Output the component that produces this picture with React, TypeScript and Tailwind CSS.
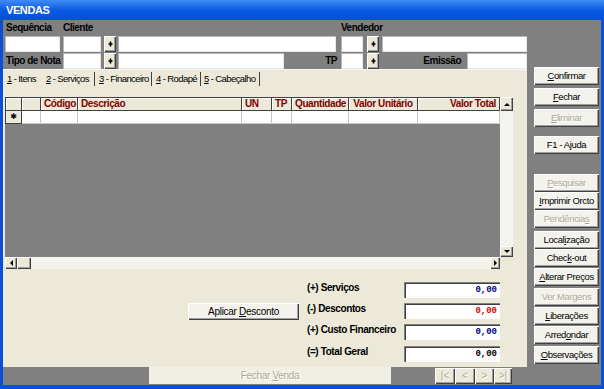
import React from "react";

const bevel = "shadow-[inset_1px_1px_0_#ffffff,inset_-1px_-1px_0_#404040,inset_-2px_-2px_0_#a0a0a0]";
const sunken = "shadow-[inset_1px_1px_0_#808080,inset_2px_2px_0_#404040,inset_-1px_-1px_0_#ffffff]";
const field = "bg-white shadow-[inset_1px_1px_0_#b8b8b8,inset_-1px_-1px_0_#e8e8e8]";
const offText = "text-[#aca899] [text-shadow:1px_1px_0_#ffffff]";

function Acc({ text, u }: { text: string; u?: number }) {
  if (u === undefined) return <span className="whitespace-pre">{text}</span>;
  return (
    <span className="whitespace-pre">
      {text.slice(0, u)}
      <span className="underline">{text[u]}</span>
      {text.slice(u + 1)}
    </span>
  );
}

const sideButtons = [
  { label: "Confirmar", u: 0, mt: "mt-0" },
  { label: "Fechar", u: 0, mt: "mt-[3px]" },
  { label: "Eliminar", u: 0, off: true, mt: "mt-[3px]" },
  { label: "F1 - Ajuda", mt: "mt-[9px]" },
  { label: "Pesquisar", u: 0, off: true, mt: "mt-[20px]" },
  { label: "Imprimir Orcto", u: 0, mt: "mt-0" },
  { label: "Pendências", u: 9, off: true, mt: "mt-0" },
  { label: "Localização", u: 5, mt: "mt-[3px]" },
  { label: "Check-out", u: 4, mt: "mt-0" },
  { label: "Alterar Preços", u: 0, mt: "mt-[1px]" },
  { label: "Ver Margens", off: true, mt: "mt-[2px]" },
  { label: "Liberações", u: 0, mt: "mt-[1px]" },
  { label: "Arredondar", u: 5, mt: "mt-[1px]" },
  { label: "Observações", u: 0, mt: "mt-[2px]" },
];

const cols = [
  { w: "w-[17px]", label: "" },
  { w: "w-[19px]", label: "" },
  { w: "w-[37px]", label: "Código" },
  { w: "w-[164px]", label: "Descrição" },
  { w: "w-[30px]", label: "UN" },
  { w: "w-[20px]", label: "TP" },
  { w: "w-[57px]", label: "Quantidade" },
  { w: "w-[69px]", label: "Valor Unitário", align: "justify-center" },
  { w: "w-[82px]", label: "Valor Total", align: "justify-end" },
];

const totals = [
  { label: "(+) Serviços", color: "text-[#000080]", mb: "mb-[5px]" },
  { label: "(-) Descontos", color: "text-[#e00000]", mb: "mb-[5px]" },
  { label: "(+) Custo Financeiro", color: "text-[#000080]", mb: "mb-[6px]" },
  { label: "(=) Total Geral", color: "text-black", mb: "mb-0" },
];

function Plus() {
  return (
    <div className={`w-[12px] h-[16px] bg-[#ece9d8] ${bevel} grid place-items-center`}>
      <svg width="5" height="6" viewBox="0 0 5 6">
        <path d="M2.5 0.5V5.5M0.5 3H4.5" stroke="#000" strokeWidth="1.6" />
      </svg>
    </div>
  );
}

function Arrow({ dir }: { dir: "up" | "down" | "left" | "right" }) {
  const d = {
    up: "M1 4L4 1L7 4Z",
    down: "M1 1L4 4L7 1Z",
    left: "M4 1L1 4L4 7Z",
    right: "M1 1L4 4L1 7Z",
  }[dir];
  const vert = dir === "up" || dir === "down";
  return (
    <svg width={vert ? 8 : 5} height={vert ? 5 : 8} viewBox={vert ? "0 0 8 5" : "0 0 5 8"}>
      <path d={d} fill="#000" />
    </svg>
  );
}

export default function App() {
  return (
    <div className="w-[604px] h-[389px] overflow-hidden flex flex-col bg-[#0b4fd6] font-['Liberation_Sans',Arial,sans-serif] text-[10px] text-black leading-none">
      <div className="h-[20px] shrink-0 flex items-center pl-[6px] bg-gradient-to-b from-[#3f8cf5] via-[#0b5ae2] to-[#0550d8] text-white font-bold text-[11px] tracking-[-0.4px]">
        VENDAS
      </div>

      <div className="flex h-[365px] mx-[3px] bg-[#808080]">
        <div className="w-[524px] flex flex-col">
          {/* header fields */}
          <div className="h-[49px] flex flex-col font-bold tracking-[-0.5px]">
            <div className="h-[16px] flex items-center">
              <span className="w-[60px] pl-[3px]">Sequência</span>
              <span className="w-[278px]">Cliente</span>
              <span>Vendedor</span>
            </div>
            <div className="h-[16px] flex pl-[2px]">
              <div className={`w-[55px] ${field}`} />
              <div className={`w-[38px] ml-[3px] ${field}`} />
              <div className="ml-[3px]"><Plus /></div>
              <div className={`w-[218px] ml-[2px] ${field}`} />
              <div className={`w-[22px] ml-[5px] ${field}`} />
              <div className="ml-[4px]"><Plus /></div>
              <div className={`w-[145px] ml-[3px] ${field}`} />
            </div>
            <div className="h-[16px] mt-[1px] flex items-stretch">
              <span className="w-[60px] pl-[3px] self-center whitespace-nowrap">Tipo de Nota</span>
              <div className={`w-[38px] ${field}`} />
              <div className="ml-[3px]"><Plus /></div>
              <div className={`w-[166px] ml-[2px] ${field}`} />
              <span className="w-[57px] pr-[4px] text-right self-center">TP</span>
              <div className={`w-[22px] ${field}`} />
              <div className="ml-[4px]"><Plus /></div>
              <span className="w-[88px] pr-[6px] text-right self-center">Emissão</span>
              <div className={`w-[60px] ${field}`} />
            </div>
          </div>

          {/* tab strip */}
          <div className="h-[17px] flex items-end pl-[4px] bg-[#ece9d8] border-t border-[#f7f6f0] text-[9.5px] tracking-[-0.6px] whitespace-nowrap">
            <span className="w-[39px] h-[14px] flex items-center"><Acc text="1 - Itens" u={0} /></span>
            <span className="w-[48px] h-[14px] flex items-center"><Acc text="2 - Serviços" u={0} /></span>
            <span className="w-[57px] h-[14px] flex items-center pl-[4px] border-l border-[#404040]"><Acc text="3 - Financeiro" u={0} /></span>
            <span className="w-[49px] h-[14px] flex items-center pl-[4px] border-l border-[#404040]"><Acc text="4 - Rodapé" u={0} /></span>
            <span className="w-[60px] h-[14px] flex items-center pl-[3px] border-l border-[#404040] border-r"><Acc text="5 - Cabeçalho" u={0} /></span>
          </div>

          {/* main panel */}
          <div className="h-[281px] flex flex-col bg-[#ece9d8]">
            <div className="ml-[2px] mt-[11px] w-[508px] h-[172px] flex flex-col">
              <div className="h-[160px] flex">
                <div className="w-[495px] flex flex-col bg-[#808080]">
                  <div className="h-[14px] flex">
                    {cols.map((c, i) => (
                      <div
                        key={i}
                        className={`${c.w} ${c.align ?? "justify-start"} flex items-center px-[3px] bg-[#ece9d8] border-r border-b border-t border-[#404040] ${i === 0 ? "border-l" : ""} shadow-[inset_1px_1px_0_#ffffff] font-bold text-[#800000] tracking-[-0.4px] whitespace-nowrap`}
                      >
                        {c.label}
                      </div>
                    ))}
                  </div>
                  <div className="h-[13px] flex">
                    {cols.map((c, i) => (
                      <div
                        key={i}
                        className={`${c.w} ${i === 0 ? "bg-[#ece9d8] border-l border-[#404040] grid place-items-center" : "bg-white border-[#c8c8c8]"} border-r border-b`}
                      >
                        {i === 0 && <span className="font-['DejaVu_Sans',sans-serif] text-[8px] leading-none">✱</span>}
                      </div>
                    ))}
                  </div>
                </div>
                <div className="w-[13px] flex flex-col bg-[#f4f3ee]">
                  <div className={`h-[14px] grid place-items-center bg-[#ece9d8] ${bevel}`}><Arrow dir="up" /></div>
                  <div className="flex-1" />
                  <div className={`h-[11px] grid place-items-center bg-[#ece9d8] ${bevel}`}><Arrow dir="down" /></div>
                </div>
              </div>
              <div className="h-[12px] flex bg-[#f4f3ee]">
                <div className={`w-[12px] grid place-items-center bg-[#ece9d8] ${bevel}`}><Arrow dir="left" /></div>
                <div className={`w-[14px] bg-[#ece9d8] ${bevel}`} />
                <div className="flex-1" />
                <div className={`w-[10px] grid place-items-center bg-[#ece9d8] ${bevel}`}><Arrow dir="right" /></div>
                <div className="w-[13px] bg-[#ece9d8]" />
              </div>
            </div>

            <div className="mt-[13px] flex flex-col">
              {totals.map((t, i) => (
                <div key={t.label} className={`h-[16px] flex ml-[185px] ${t.mb}`}>
                  <div className="w-[111px]">
                    {i === 1 && (
                      <div className={`h-[17px] flex items-center justify-center bg-[#f3f2ec] ${bevel} tracking-[-0.3px]`}>
                        <Acc text="Aplicar Desconto" u={8} />
                      </div>
                    )}
                  </div>
                  <div className="w-[97px] ml-[8px] pt-[1px] font-bold tracking-[-0.4px] whitespace-nowrap">{t.label}</div>
                  <div className={`w-[96px] h-[16px] flex items-center justify-end pr-[3px] bg-white ${sunken}`}>
                    <span className={`font-['Liberation_Mono',monospace] font-bold text-[9px] ${t.color}`}>0,00</span>
                  </div>
                </div>
              ))}
            </div>
          </div>

          {/* bottom bar */}
          <div className="h-[18px] flex items-start">
            <div className={`ml-[146px] w-[242px] h-[17px] flex items-center justify-center bg-[#f1efe4] ${offText} tracking-[-0.3px]`}>
              <Acc text="Fechar Venda" u={7} />
            </div>
            <div className="ml-[44px] mt-[1px] flex">
              {["|<", "<", ">", ">|"].map((s, i) => (
                <div
                  key={s}
                  className={`${i === 3 ? "w-[18px]" : i === 2 ? "w-[19px]" : "w-[20px]"} h-[16px] flex items-center justify-center bg-[#ece9d8] ${bevel} ${offText}`}
                >
                  {s}
                </div>
              ))}
            </div>
          </div>
        </div>

        {/* side buttons */}
        <div className="flex-1 flex flex-col pl-[7px] pt-[47px]">
          {sideButtons.map((b) => (
            <div
              key={b.label}
              className={`${b.mt} w-[65px] h-[18px] shrink-0 flex items-center justify-center bg-[#f3f2ec] ${bevel} text-[9.5px] tracking-[-0.4px] ${b.off ? offText : ""}`}
            >
              <Acc text={b.label} u={b.u} />
            </div>
          ))}
        </div>
      </div>
    </div>
  );
}
